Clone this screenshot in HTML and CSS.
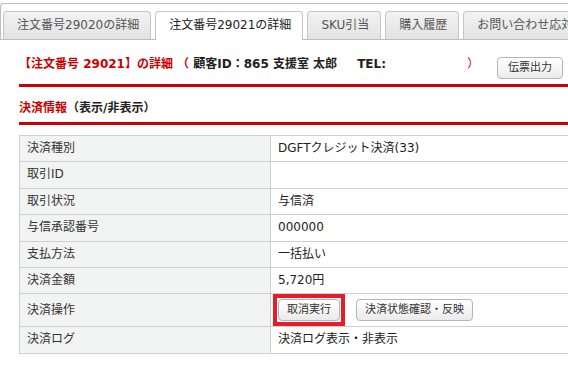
FILE: index.html
```html
<!DOCTYPE html>
<html lang="ja">
<head>
    <meta charset="UTF-8">
    <meta name="viewport" content="width=device-width, initial-scale=1.0">
    <title>注文番号29021の詳細</title>
    <link rel="stylesheet" href="styles.css">
</head>
<body>
    <div class="tabs">
        <ul class="tab-nav">
            <li class="tab">注文番号29020の詳細</li>
            <li class="tab active">注文番号29021の詳細</li>
            <li class="tab">SKU引当</li>
            <li class="tab">購入履歴</li>
            <li class="tab">お問い合わせ応対履歴</li>
        </ul>

        <div class="tab-body">
            <div class="order-head">
                <div class="order-title">
                    <span class="red">【注文番号 29021】の詳細 （</span> 顧客ID：865 支援室 太郎<span class="tel">TEL:</span><span class="red thin">）</span>
                </div>
                <button class="btn">伝票出力</button>
            </div>

            <div class="section-head"><span class="red">決済情報</span>（表示/非表示）</div>

            <table class="info">
                <tr><td class="label">決済種別</td><td>DGFTクレジット決済(33)</td></tr>
                <tr><td class="label">取引ID</td><td></td></tr>
                <tr><td class="label">取引状況</td><td>与信済</td></tr>
                <tr><td class="label">与信承認番号</td><td>000000</td></tr>
                <tr><td class="label">支払方法</td><td>一括払い</td></tr>
                <tr><td class="label">決済金額</td><td>5,720円</td></tr>
                <tr>
                    <td class="label">決済操作</td>
                    <td>
                        <div class="ops">
                            <span class="mark"><button class="btn">取消実行</button></span>
                            <button class="btn">決済状態確認・反映</button>
                        </div>
                    </td>
                </tr>
                <tr><td class="label">決済ログ</td><td>決済ログ表示・非表示</td></tr>
            </table>
        </div>
    </div>
</body>
</html>
```

FILE: styles.css
```css
body {
    margin: 0;
    font-family: "DejaVu Sans", "Noto Sans CJK JP", sans-serif;
    font-size: 12px;
    color: #333;
    background-color: #fff;
    overflow: hidden;
}

.tabs {
    width: 700px;
}

.tab-nav {
    display: flex;
    gap: 4px;
    list-style: none;
    margin: 3px 0 0;
    padding: 7px 0 0 2px;
    border: 1px solid #bdbdbd;
    border-right: none;
    border-radius: 4px 0 0 0;
}

.tab {
    padding: 0 11px 0 13px;
    line-height: 27px;
    height: 27px;
    border: 1px solid #c5c5c5;
    border-bottom: none;
    border-radius: 4px 4px 0 0;
    background: linear-gradient(#f3f3f3, #e2e2e2);
    color: #555;
    white-space: nowrap;
}

.tab.active {
    height: 28px;
    margin-bottom: -1px;
    background: #fff;
    color: #222;
}

.tab-body {
    padding-left: 19px;
}

.order-head {
    display: flex;
    align-items: flex-start;
    margin-top: 16px;
    padding-bottom: 5px;
    border-bottom: 3px solid #cc0000;
}

.order-title {
    width: 478px;
    line-height: 16px;
    font-weight: bold;
    color: #222;
    white-space: nowrap;
}

.red {
    color: #cc0000;
}

.thin {
    font-weight: normal;
}

.tel {
    display: inline-block;
    width: 110px;
    margin-left: 20px;
}

.order-head .btn {
    margin-top: 1px;
    padding: 0 10px;
}

.section-head {
    padding: 13px 0 6px;
    line-height: 16px;
    font-weight: bold;
    color: #222;
    border-bottom: 3px solid #cc0000;
}

.info {
    margin-top: 10px;
    border-collapse: collapse;
    width: 640px;
}

.info td {
    border: 1px solid #cfcfcf;
    padding: 5px 7px;
    line-height: 15.4px;
    color: #222;
}

.info td.label {
    width: 236px;
    background-color: #f2f3f3;
    color: #333;
}

.ops {
    display: flex;
    gap: 16px;
}

.btn {
    font-family: inherit;
    font-size: 11px;
    height: 22px;
    line-height: 20px;
    padding: 0 8px;
    border: 1px solid #b4b4c2;
    border-radius: 4px;
    background: linear-gradient(#ffffff, #ebebeb);
    color: #333;
    cursor: pointer;
}

/* red annotation box around the cancel button */
.mark {
    display: flex;
    margin: -5px;
    padding: 1px;
    border: 4px solid #e41e26;
}
```
